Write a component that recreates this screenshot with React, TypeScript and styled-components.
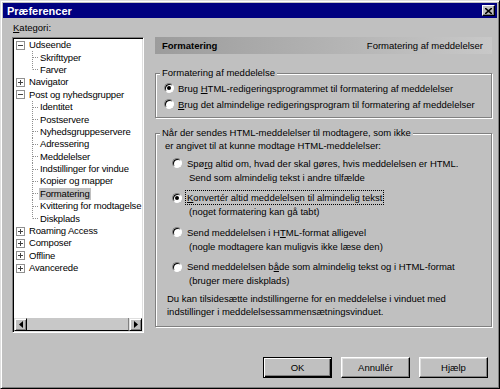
import React from "react";
import styled, { createGlobalStyle } from "styled-components";

const GlobalStyle = createGlobalStyle`
  html, body { margin: 0; padding: 0; background: #c0c0c0; }
  body { font-family: "Liberation Sans", Arial, sans-serif; }
`;

const Window = styled.div`
  width: 500px;
  height: 389px;
  box-sizing: border-box;
  background: #c0c0c0;
  border: 1px solid;
  border-color: #dfdfdf #000 #000 #dfdfdf;
  box-shadow: inset 1px 1px #fff, inset -1px -1px #808080;
  padding: 2px;
  display: flex;
  flex-direction: column;
  font-family: "Liberation Sans", Arial, sans-serif;
  font-size: 9.5px;
  color: #000;
`;

const TitleBar = styled.div`
  height: 15px;
  background: #000080;
  display: flex;
  align-items: center;
  justify-content: space-between;
  padding: 0 2px;
`;

const Title = styled.span`
  color: #fff;
  font-weight: bold;
  font-size: 11px;
  margin-left: 2px;
`;

const CloseButton = styled.button`
  width: 13px;
  height: 11px;
  padding: 0;
  background: #c0c0c0;
  border: 1px solid;
  border-color: #fff #000 #000 #fff;
  box-shadow: inset -1px -1px #808080;
  display: flex;
  align-items: center;
  justify-content: center;
`;

const Content = styled.div`
  flex: 1;
  display: flex;
  flex-direction: column;
  padding: 4px 5px 0 9px;
`;

const MainRow = styled.div`
  display: flex;
  gap: 11px;
`;

const LeftColumn = styled.div`
  width: 132px;
  display: flex;
  flex-direction: column;
`;

const Label = styled.div`
  line-height: 12px;
  height: 12px;
  margin-bottom: 3px;
  padding-left: 1px;
`;

const Tree = styled.div`
  height: 296px;
  box-sizing: border-box;
  border: 1px solid;
  border-color: #808080 #fff #fff #808080;
  box-shadow: inset 1px 1px #000, inset -1px -1px #dfdfdf;
  background: #fff;
  padding: 1px;
  display: flex;
  flex-direction: column;
`;

const TreeList = styled.div`
  flex: 1;
  overflow: hidden;
  letter-spacing: -0.15px;
`;

const TreeRow = styled.div<{ $level: number }>`
  height: 12.4px;
  display: flex;
  align-items: center;
  padding-left: ${(p) => (p.$level === 0 ? 2 : 11)}px;
  white-space: nowrap;
`;

const TreeText = styled.span<{ $selected?: boolean }>`
  line-height: 12px;
  padding: 0 1px;
  background: ${(p) => (p.$selected ? "#c0c0c0" : "transparent")};
`;

const HScroll = styled.div`
  height: 13px;
  display: flex;
  background: #c0c0c0;
`;

const ScrollButton = styled.div`
  width: 13px;
  box-sizing: border-box;
  border: 1px solid;
  border-color: #dfdfdf #000 #000 #dfdfdf;
  box-shadow: inset 1px 1px #fff, inset -1px -1px #808080;
  display: flex;
  align-items: center;
  justify-content: center;
`;

const ScrollThumb = styled.div`
  flex: 1;
  box-sizing: border-box;
  border-bottom: 1px solid #000;
  border-right: 1px solid #808080;
  background: #c8c8c8;
`;

const RightColumn = styled.div`
  flex: 1;
  padding-top: 15px;
  display: flex;
  flex-direction: column;
`;

const Header = styled.div`
  height: 17px;
  background: linear-gradient(to right, #9c9c9c, #c8c8c8);
  display: flex;
  align-items: center;
  justify-content: space-between;
  padding: 0 9px 0 7px;
`;

const HeaderTitle = styled.span`
  font-weight: bold;
  font-size: 9.5px;
`;

const Group = styled.fieldset<{ $gap: number }>`
  margin: ${(p) => p.$gap}px 0 0;
  padding: 0;
  border: 1px solid #808080;
  box-shadow: inset 1px 1px #fff, 1px 1px #fff;
  min-width: 0;
`;

const Legend = styled.legend`
  margin-left: 4px;
  padding: 0 2px;
  line-height: 12px;
  background: #c0c0c0;
`;

const GroupBody = styled.div<{ $pad: string }>`
  padding: ${(p) => p.$pad};
  display: flex;
  flex-direction: column;
`;

const SimpleRow = styled.label`
  height: 16px;
  display: flex;
  align-items: center;
  gap: 4px;
  padding-left: 8px;
`;

const SubLine = styled.div`
  line-height: 12px;
  padding-left: 9px;
`;

const OptionList = styled.div`
  display: flex;
  flex-direction: column;
  gap: 6.5px;
  margin-top: 4px;
  padding-left: 16px;
`;

const Option = styled.label`
  display: flex;
  align-items: flex-start;
  gap: 4px;
`;

const OptionText = styled.div`
  display: flex;
  flex-direction: column;
`;

const Line = styled.span<{ $indent?: number; $focus?: boolean }>`
  line-height: 13px;
  height: 14px;
  display: flex;
  align-items: center;
  padding-left: ${(p) => p.$indent ?? 0}px;
  & > span {
    outline: ${(p) => (p.$focus ? "1px dotted #000" : "none")};
    padding: 0 1px;
  }
`;

const RadioDot = styled.span<{ $checked?: boolean; $top?: number }>`
  width: 10px;
  height: 10px;
  flex: none;
  box-sizing: border-box;
  border-radius: 50%;
  border: 1px solid;
  border-color: #808080 #fff #fff #808080;
  box-shadow: inset 1px 1px #000;
  background: #fff;
  margin-top: ${(p) => p.$top ?? 0}px;
  display: flex;
  align-items: center;
  justify-content: center;
  &::after {
    content: "";
    width: 4px;
    height: 4px;
    border-radius: 50%;
    background: ${(p) => (p.$checked ? "#000" : "transparent")};
  }
`;

const Note = styled.div`
  line-height: 13px;
  margin-top: 4px;
  padding-left: 11px;
`;

const ButtonRow = styled.div`
  display: flex;
  justify-content: flex-end;
  gap: 9px;
  margin: 24px 4px 0 0;
`;

const Button = styled.button<{ $default?: boolean }>`
  width: 69px;
  height: 21px;
  padding: 0;
  font-family: "Liberation Sans", Arial, sans-serif;
  font-size: 9.5px;
  color: #000;
  background: #c0c0c0;
  border: 1px solid;
  border-color: ${(p) => (p.$default ? "#000" : "#fff #000 #000 #fff")};
  box-shadow: ${(p) =>
    p.$default
      ? "inset 1px 1px #fff, inset -1px -1px #000, inset -2px -2px #808080"
      : "inset -1px -1px #808080, inset 1px 1px #dfdfdf"};
`;

type Node = {
  label: string;
  level: 0 | 1;
  expander?: "plus" | "minus";
  last?: boolean;
  selected?: boolean;
};

const nodes: Node[] = [
  { label: "Udseende", level: 0, expander: "minus" },
  { label: "Skrifttyper", level: 1 },
  { label: "Farver", level: 1, last: true },
  { label: "Navigator", level: 0, expander: "plus" },
  { label: "Post og nyhedsgrupper", level: 0, expander: "minus" },
  { label: "Identitet", level: 1 },
  { label: "Postservere", level: 1 },
  { label: "Nyhedsgruppeservere", level: 1 },
  { label: "Adressering", level: 1 },
  { label: "Meddelelser", level: 1 },
  { label: "Indstillinger for vindue", level: 1 },
  { label: "Kopier og mapper", level: 1 },
  { label: "Formatering", level: 1, selected: true },
  { label: "Kvittering for modtagelse", level: 1 },
  { label: "Diskplads", level: 1, last: true },
  { label: "Roaming Access", level: 0, expander: "plus" },
  { label: "Composer", level: 0, expander: "plus" },
  { label: "Offline", level: 0, expander: "plus" },
  { label: "Avancerede", level: 0, expander: "plus" },
];

const Expander = ({ kind }: { kind: "plus" | "minus" }) => (
  <svg width="9" height="9" viewBox="0 0 9 9" style={{ marginRight: 3, flex: "none" }}>
    <rect x="0.5" y="0.5" width="8" height="8" fill="#fff" stroke="#909090" />
    <line x1="2" y1="4.5" x2="7" y2="4.5" stroke="#404040" />
    {kind === "plus" && <line x1="4.5" y1="2" x2="4.5" y2="7" stroke="#404040" />}
  </svg>
);

const Connector = ({ last }: { last?: boolean }) => (
  <svg width="14" height="13" viewBox="0 0 14 13" style={{ flex: "none" }}>
    <line x1="7.5" y1="0" x2="7.5" y2={last ? 6.5 : 13} stroke="#909090" strokeDasharray="1 1" />
    <line x1="8" y1="6.5" x2="14" y2="6.5" stroke="#909090" strokeDasharray="1 1" />
  </svg>
);

const Arrow = ({ dir }: { dir: "left" | "right" }) => (
  <svg width="4" height="7" viewBox="0 0 4 7">
    {dir === "left" ? <path d="M4 0 L0 3.5 L4 7 Z" fill="#000" /> : <path d="M0 0 L4 3.5 L0 7 Z" fill="#000" />}
  </svg>
);

const Radio = ({ checked, top }: { checked?: boolean; top?: number }) => (
  <RadioDot $checked={checked} $top={top} />
);

export default function App() {
  return (
    <>
      <GlobalStyle />
      <Window>
        <TitleBar>
          <Title>Præferencer</Title>
          <CloseButton aria-label="Luk">
            <svg width="7" height="6" viewBox="0 0 7 6">
              <path d="M0 0 L7 6 M7 0 L0 6" stroke="#000" strokeWidth="1.6" />
            </svg>
          </CloseButton>
        </TitleBar>
        <Content>
          <MainRow>
            <LeftColumn>
              <Label>
                <u>K</u>ategori:
              </Label>
              <Tree>
                <TreeList>
                  {nodes.map((n) => (
                    <TreeRow key={n.label} $level={n.level}>
                      {n.expander && <Expander kind={n.expander} />}
                      {n.level === 1 && <Connector last={n.last} />}
                      <TreeText $selected={n.selected}>{n.label}</TreeText>
                    </TreeRow>
                  ))}
                </TreeList>
                <HScroll>
                  <ScrollButton>
                    <Arrow dir="left" />
                  </ScrollButton>
                  <ScrollThumb />
                  <ScrollButton>
                    <Arrow dir="right" />
                  </ScrollButton>
                </HScroll>
              </Tree>
            </LeftColumn>
            <RightColumn>
              <Header>
                <HeaderTitle>Formatering</HeaderTitle>
                <span>Formatering af meddelelser</span>
              </Header>
              <Group $gap={13}>
                <Legend>Formatering af meddelelse</Legend>
                <GroupBody $pad="1px 0 5px 0">
                  <SimpleRow>
                    <Radio checked />
                    <span>
                      Brug <u>H</u>TML-redigeringsprogrammet til formatering af meddelelser
                    </span>
                  </SimpleRow>
                  <SimpleRow>
                    <Radio />
                    <span>
                      <u>B</u>rug det almindelige redigeringsprogram til formatering af meddelelser
                    </span>
                  </SimpleRow>
                </GroupBody>
              </Group>
              <Group $gap={9}>
                <Legend>Når der sendes HTML-meddelelser til modtagere, som ikke</Legend>
                <GroupBody $pad="1px 0 8px 0">
                  <SubLine>er angivet til at kunne modtage HTML-meddelelser:</SubLine>
                  <OptionList>
                    <Option>
                      <Radio top={2} />
                      <OptionText>
                        <Line>
                          <span>
                            Spø<u>r</u>g altid om, hvad der skal gøres, hvis meddelelsen er HTML.
                          </span>
                        </Line>
                        <Line $indent={3}>Send som almindelig tekst i andre tilfælde</Line>
                      </OptionText>
                    </Option>
                    <Option>
                      <Radio checked top={2} />
                      <OptionText>
                        <Line $focus>
                          <span>
                            <u>K</u>onvertér altid meddelelsen til almindelig tekst
                          </span>
                        </Line>
                        <Line $indent={3}>(noget formatering kan gå tabt)</Line>
                      </OptionText>
                    </Option>
                    <Option>
                      <Radio top={2} />
                      <OptionText>
                        <Line>
                          <span>
                            Send meddelelsen i H<u>T</u>ML-format alligevel
                          </span>
                        </Line>
                        <Line $indent={3}>(nogle modtagere kan muligvis ikke læse den)</Line>
                      </OptionText>
                    </Option>
                    <Option>
                      <Radio top={2} />
                      <OptionText>
                        <Line>
                          <span>
                            Send meddelelsen b<u>å</u>de som almindelig tekst og i HTML-format
                          </span>
                        </Line>
                        <Line $indent={3}>(bruger mere diskplads)</Line>
                      </OptionText>
                    </Option>
                  </OptionList>
                  <Note>
                    Du kan tilsidesætte indstillingerne for en meddelelse i vinduet med
                    <br />
                    indstillinger i meddelelsessammensætningsvinduet.
                  </Note>
                </GroupBody>
              </Group>
            </RightColumn>
          </MainRow>
          <ButtonRow>
            <Button $default>OK</Button>
            <Button>Annullér</Button>
            <Button>Hjælp</Button>
          </ButtonRow>
        </Content>
      </Window>
    </>
  );
}
